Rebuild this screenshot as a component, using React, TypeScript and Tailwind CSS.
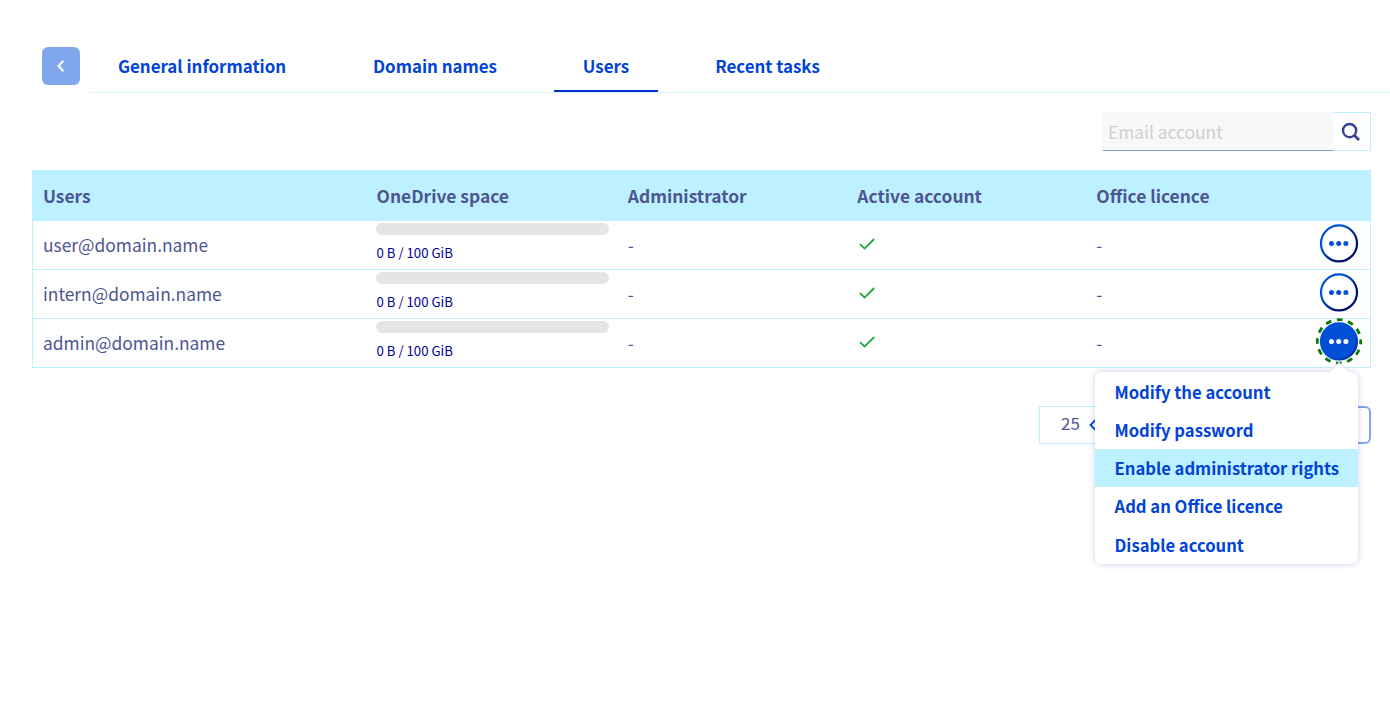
const tabs = [
  { label: 'General information', box: 'w-[226px] mr-[29px]' },
  { label: 'Domain names', box: 'w-[182px] mr-[28px]' },
  { label: 'Users', box: 'w-[104px] mr-[28px]', active: true },
  { label: 'Recent tasks', box: 'w-[163px]' },
];

const users = ['user@domain.name', 'intern@domain.name', 'admin@domain.name'];

const actions = [
  'Modify the account',
  'Modify password',
  'Enable administrator rights',
  'Add an Office licence',
  'Disable account',
];

const columns = 'grid grid-cols-[333px_251px_230px_239px_1fr]';

function MoreButton({ open }: { open: boolean }) {
  return (
    <svg width="48" height="48" viewBox="0 0 48 48" className="block shrink-0">
      <defs>
        <linearGradient id="ring" x1="0" y1="0" x2="1" y2="1">
          <stop offset="0.3" stopColor="#0050d7" />
          <stop offset="0.75" stopColor="#000e6f" />
        </linearGradient>
        <linearGradient id="ring-open" x1="0" y1="0" x2="1" y2="1">
          <stop offset="0.55" stopColor="#0050d7" />
          <stop offset="0.9" stopColor="#0a2c9a" />
        </linearGradient>
      </defs>
      {open && (
        <circle cx="24" cy="23.4" r="21.7" fill="none" stroke="#0a7a0a" strokeWidth="2.8" strokeDasharray="5.8 5.562" strokeDashoffset="2.9" />
      )}
      <circle
        cx="24"
        cy="23.4"
        r="18"
        fill={open ? '#0050d7' : '#fff'}
        stroke={open ? 'url(#ring-open)' : 'url(#ring)'}
        strokeWidth="2.2"
      />
      {[16.5, 23.7, 30.9].map((cx) => (
        <circle key={cx} cx={cx} cy="23.5" r="2.5" fill={open ? '#fff' : '#0050d7'} />
      ))}
    </svg>
  );
}

function ActionMenu() {
  return (
    <div className="absolute left-[1095px] top-[372px] h-[192px] w-[263px] rounded-[6px] bg-white text-[16.64px] font-bold text-[#0044d6] shadow-[0_0_6px_rgba(0,14,156,0.2)]">
      <svg className="absolute left-[232px] top-[-10px]" width="24" height="12" viewBox="0 0 24 12">
        <path d="M0 12 L2 10 L12 0.5 L22 10 L24 12Z" fill="#fff" />
        <path d="M1.5 10 L12 0.5 L22.5 10" fill="none" stroke="#d9dcf0" strokeWidth="1" />
      </svg>
      <ul className="pt-[0.5px]">
        {actions.map((action, i) => (
          <li
            key={action}
            className={`flex h-[38.25px] items-center whitespace-pre pl-[19.5px] leading-[24px] ${i === 2 ? 'bg-[#bef1ff]' : ''}`}
          >
            {action}
          </li>
        ))}
      </ul>
    </div>
  );
}

export default function App() {
  return (
    <div className="relative h-[704px] w-[1390px] overflow-hidden bg-white pt-[46px] font-['Noto_Sans_CJK_SC',sans-serif] text-[17.4px] text-[#4d5592]">
      <header className="flex h-[47px] pl-[42px]">
        <button className="mt-[0.5px] flex h-[38px] w-[38px] items-center justify-center rounded-[6px] bg-[#80a7eb]">
          <svg width="8" height="14" viewBox="0 0 8 14" fill="none" stroke="#fff" strokeWidth="2">
            <path d="M6.3 1.8 L1.5 7 L6.3 12.2" />
          </svg>
        </button>
        <nav className="ml-[9px] flex flex-1 border-b border-[#dff8ff] text-[16.9px] font-bold text-[#0044d6]">
          {tabs.map((tab) => (
            <a
              key={tab.label}
              className={`flex h-[46px] items-center justify-center whitespace-nowrap border-b-2 pb-[4px] leading-[24px] ${tab.box} ${tab.active ? 'border-[#0034d0]' : 'border-transparent'}`}
            >
              {tab.label}
            </a>
          ))}
        </nav>
      </header>

      <div className="mr-[19px] mt-[19px] flex h-[39px] justify-end">
        <div className="flex w-[230px] items-center border-b border-[#7a9be8] bg-[#f8f8f8] pl-[5px] pt-px leading-[24px] text-[#cfcfcf]">Email account</div>
        <button className="flex w-[38px] items-center justify-center border border-l-0 border-[#bef1ff] pr-[2px]">
          <svg width="20" height="20" viewBox="0 0 20 20" fill="none" stroke="#34438f" strokeWidth="2.4">
            <circle cx="8.6" cy="8.6" r="6.6" />
            <path d="M13.2 13.2 L18 18" strokeWidth="2.8" />
          </svg>
        </button>
      </div>

      <section className="ml-[32px] mr-[19px] mt-[19px] border border-[#bef1ff]">
        <div className={`${columns} h-[50px] items-center bg-[#bef1ff] pl-[10px] font-bold leading-[24px]`}>
          <span>Users</span>
          <span className="pl-[0.5px]">OneDrive space</span>
          <span className="pl-[0.8px]">Administrator</span>
          <span className="pl-[0.3px]">Active account</span>
          <span className="pl-[0.3px]">Office licence</span>
        </div>
        {users.map((user, i) => (
          <div key={user} className={`${columns} h-[49px] items-center border-b border-[#bef1ff] pl-[10px] leading-[24px] last:h-[48px] last:border-b-0`}>
            <span>{user}</span>
            <div className="flex h-full flex-col pt-[2px]">
              <div className="h-[12px] w-[233px] rounded-full bg-[#e5e5e5]" />
              <span className="mt-[8px] pl-[0.5px] text-[13.2px] leading-[20px] text-[#00009c]">0 B / 100 GiB</span>
            </div>
            <span className="pl-[0.8px]">-</span>
            <svg width="18" height="16" viewBox="0 0 18 16" className="ml-px mb-[3px]" fill="none" stroke="#1ba63c" strokeWidth="1.8">
              <path d="M2 8.2 L6.6 12.6 L16.2 3" />
            </svg>
            <div className="flex h-[48px] items-center justify-between pr-[7px]">
              <span className="pl-[0.3px]">-</span>
              <div className="-mt-[3px]">
                <MoreButton open={i === 2} />
              </div>
            </div>
          </div>
        ))}
      </section>

      <div className="mr-[19px] mt-[38px] flex justify-end">
        <div className="flex h-[38px] w-[80px] items-center border border-[#bef1ff] pl-[21px]">
          <span className="-mt-[5px] text-[17px] leading-[24px]">25</span>
          <svg className="ml-[9px]" width="16" height="14" viewBox="0 0 16 14" fill="none" stroke="#0048d3" strokeWidth="1.8">
            <path d="M7 1.5 L1.5 7 L7 12.5" />
          </svg>
        </div>
        <div className="h-[38px] w-[252px] rounded-[6px] border-2 border-[#80a7eb]" />
      </div>

      <ActionMenu />
    </div>
  );
}
